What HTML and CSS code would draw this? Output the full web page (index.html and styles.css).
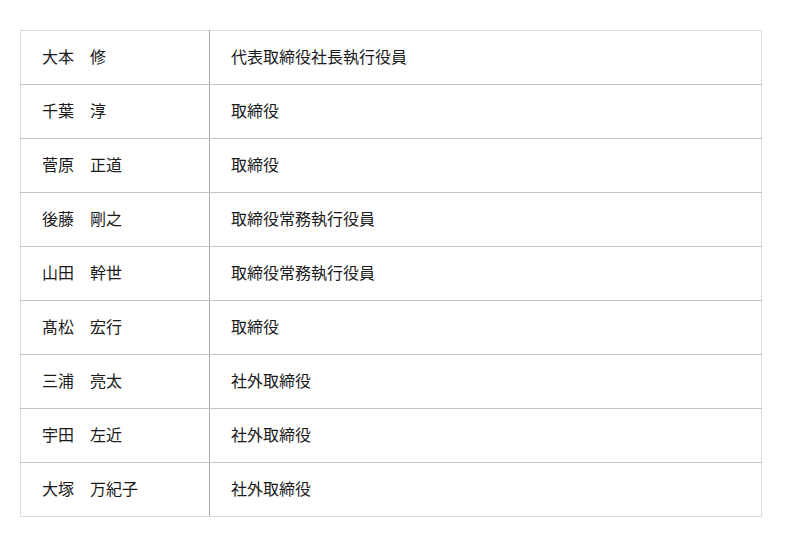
FILE: index.html
```html
<!DOCTYPE html>
<html lang="ja">
<head>
<meta charset="utf-8">
<link rel="stylesheet" href="styles.css">
</head>
<body>
<table class="officers">
<tbody>
<tr><td class="name">大本　修</td><td class="title">代表取締役社長執行役員</td></tr>
<tr><td class="name">千葉　淳</td><td class="title">取締役</td></tr>
<tr><td class="name">菅原　正道</td><td class="title">取締役</td></tr>
<tr><td class="name">後藤　剛之</td><td class="title">取締役常務執行役員</td></tr>
<tr><td class="name">山田　幹世</td><td class="title">取締役常務執行役員</td></tr>
<tr><td class="name">髙松　宏行</td><td class="title">取締役</td></tr>
<tr><td class="name">三浦　亮太</td><td class="title">社外取締役</td></tr>
<tr><td class="name">宇田　左近</td><td class="title">社外取締役</td></tr>
<tr><td class="name">大塚　万紀子</td><td class="title">社外取締役</td></tr>
</tbody>
</table>
</body>
</html>
```
FILE: styles.css
```css
html, body {
  margin: 0;
  padding: 0;
  background: #fff;
}
body {
  padding: 30px 0 0 20px;
  font-family: "Noto Sans CJK JP", "Noto Sans", sans-serif;
  color: #1a1a1a;
}
.officers {
  width: 742px;
  border-collapse: collapse;
  border: 1px solid #dcdcdc;
}
.officers td {
  height: 54px;
  padding: 0 0 3px 21px;
  font-size: 16px;
  line-height: 20px;
  vertical-align: middle;
  border-bottom: 1px solid #c4c4c4;
  box-sizing: border-box;
}
.officers tr:last-child td {
  border-bottom: 1px solid #dcdcdc;
}
.officers td.name {
  width: 189px;
  border-right: 1px solid #a8a8a8;
}
```
